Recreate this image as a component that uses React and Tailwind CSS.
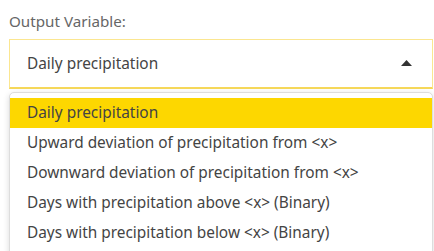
const options = [
  'Daily precipitation',
  'Upward deviation of precipitation from <x>',
  'Downward deviation of precipitation from <x>',
  'Days with precipitation above <x> (Binary)',
  'Days with precipitation below <x> (Binary)',
]

export default function App() {
  const selected = options[0]

  return (
    <div className="w-[434px] h-[251px] overflow-hidden bg-white pl-[9px] pr-px pt-[10px] font-['Noto_Sans',sans-serif]">
      {/* label */}
      <label className="block text-[15.2px] leading-[22px] text-[#666]">Output Variable:</label>

      {/* select box */}
      <div className="mt-[7px] h-[50px] border border-[#fbe690] border-b-2 border-b-[#f6d85a] flex items-center pl-[17px] pr-[20px]">
        <span className="flex-1 text-[15.4px] text-[#444]">{selected}</span>
        <svg width="11" height="6" viewBox="0 0 11 6" className="mt-[-2px]">
          <path d="M0 6 L5.5 0 L11 6 Z" fill="#333" />
        </svg>
      </div>

      {/* open menu */}
      <div className="mt-[3px] border border-[#ddd] rounded-[5px] shadow-[0_2px_6px_rgba(0,0,0,0.15)] pt-[5px] pb-2 bg-white">
        {options.map((opt) => (
          <div
            key={opt}
            className={`h-[30px] flex items-center pl-[17px] text-[15.4px] text-[#444] ${opt === selected ? 'bg-[#fdd700]' : ''}`}
          >
            {opt}
          </div>
        ))}
      </div>
    </div>
  )
}
